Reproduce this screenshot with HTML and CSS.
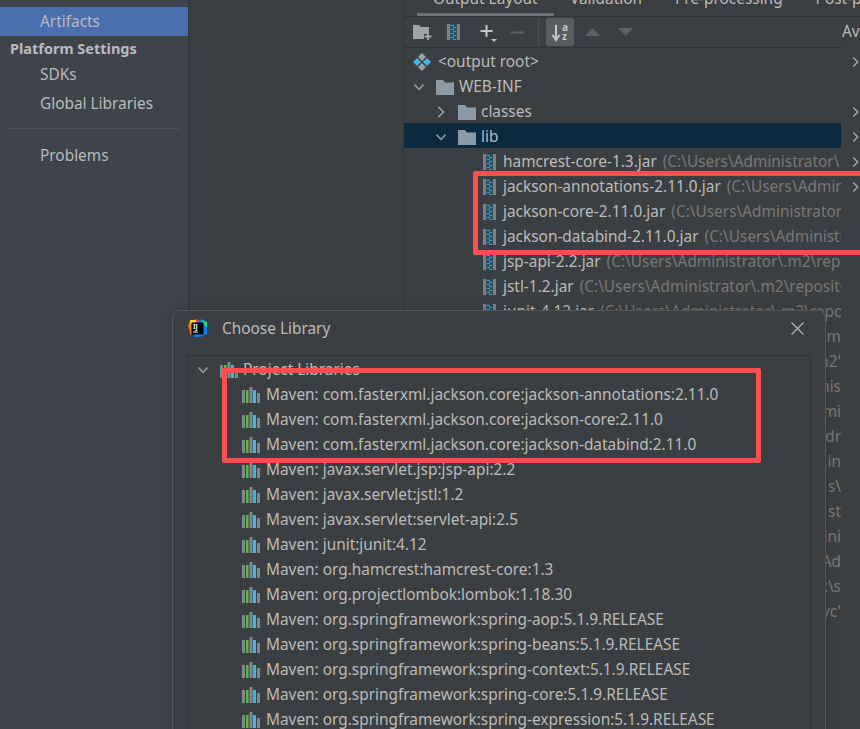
FILE: index.html
```html
<!DOCTYPE html>
<html lang="en">
<head>
  <meta charset="UTF-8">
  <meta name="viewport" content="width=device-width, initial-scale=1.0">
  <title>Project Structure</title>
  <link rel="stylesheet" href="styles.css">
</head>
<body>
  <svg class="icon-defs" width="0" height="0">
    <defs>
      <symbol id="i-folder" viewBox="0 0 18 16">
        <path d="M0 1h7l2 2.500h9V16H0z" fill="#8b9aa5"/>
      </symbol>
      <symbol id="i-jar" viewBox="0 0 13 16">
        <rect x="0" y="0" width="3.500" height="16" fill="#76838b"/>
        <rect x="9.500" y="0" width="3.500" height="16" fill="#76838b"/>
        <rect x="3.500" y="0" width="6" height="16" fill="#27414f"/>
        <path d="M4 1.500h3M6 3.500h3M4 5.500h3M6 7.500h3M4 9.500h3M6 11.500h3M4 13.500h3M6 15.500h3" stroke="#2f9fc9" stroke-width="1.300"/>
      </symbol>
      <symbol id="i-maven" viewBox="0 0 18 16">
        <rect x="0" y="3" width="3" height="13" fill="#7d8a92"/>
        <rect x="4" y="3" width="2.500" height="13" fill="#62b543"/>
        <rect x="7.500" y="0" width="3" height="16" fill="#7d8a92"/>
        <rect x="11" y="3" width="3" height="13" fill="#40b6e0"/>
        <rect x="15" y="6" width="3" height="10" fill="#7d8a92"/>
      </symbol>
      <symbol id="i-chev-right" viewBox="0 0 10 12">
        <path d="M2.500 1L7.500 6l-5 5" fill="none" stroke="#afb1b3" stroke-width="1.400"/>
      </symbol>
      <symbol id="i-chev-down" viewBox="0 0 12 10">
        <path d="M1.500 2.500L6 7.500l4.500-5" fill="none" stroke="#a0a3a5" stroke-width="1.400"/>
      </symbol>
    </defs>
  </svg>

  <div class="app">
    <aside class="sidebar">
      <div class="side-item selected">Artifacts</div>
      <div class="side-header">Platform Settings</div>
      <div class="side-item">SDKs</div>
      <div class="side-item">Global Libraries</div>
      <div class="side-sep"></div>
      <div class="side-item">Problems</div>
    </aside>

    <div class="middle"></div>

    <main class="content">
      <div class="tabs">
        <span class="tab tab-output">Output Layout</span>
        <span class="tab">Validation</span>
        <span class="tab">Pre-processing</span>
        <span class="tab">Post-processing</span>
      </div>

      <div class="toolbar">
        <div class="tools">
          <svg class="tool tool-folder" width="19" height="18" viewBox="0 0 19 18">
            <path d="M0 2h6l2 2h8v7h-5v5H0z" fill="#a0a3a5"/>
            <path d="M15 10v7M11.500 13.500h7" stroke="#a0a3a5" stroke-width="2"/>
          </svg>
          <svg class="tool tool-jar" width="13" height="16"><use href="#i-jar"/></svg>
          <svg class="tool tool-add" width="19" height="20" viewBox="0 0 19 20">
            <path d="M6.500 1v12M0.500 7h12" stroke="#c4c6c8" stroke-width="2"/>
            <path d="M11 15h6l-3 3z" fill="#c4c6c8"/>
          </svg>
          <svg class="tool tool-remove" width="13" height="3" viewBox="0 0 13 3">
            <rect width="13" height="2" y="0.500" fill="#5f6264"/>
          </svg>
          <span class="tool-sep"></span>
          <span class="tool-sort">
            <svg width="24" height="24" viewBox="0 0 24 24">
              <path d="M8 5v14M4.500 15l3.500 5 3.500-5" fill="none" stroke="#c4c6c8" stroke-width="2"/>
              <text x="14" y="11" class="sort-letter">a</text>
              <text x="14" y="20" class="sort-letter">z</text>
            </svg>
          </span>
          <svg class="tool tool-up" width="15" height="8" viewBox="0 0 15 8"><path d="M7.500 0L15 8H0z" fill="#5f6264"/></svg>
          <svg class="tool tool-down" width="15" height="8" viewBox="0 0 15 8"><path d="M0 0h15L7.500 8z" fill="#5f6264"/></svg>
        </div>
        <div class="avail-title">Available Elements</div>
      </div>

      <div class="panes">
        <div class="tree">
          <div class="row level-root">
            <svg class="root-icon" width="18" height="18" viewBox="0 0 18 18">
              <path d="M9 0l4 4-4 4-4-4z" fill="#9aa0a5"/>
              <path d="M4 5l4 4-4 4-4-4z" fill="#40b6e0"/>
              <path d="M14 5l4 4-4 4-4-4z" fill="#40b6e0"/>
              <path d="M9 10l4 4-4 4-4-4z" fill="#9aa0a5"/>
            </svg>
            <span class="name">&lt;output root&gt;</span>
          </div>
          <div class="row level-1">
            <svg class="chev" width="12" height="10"><use href="#i-chev-down"/></svg>
            <svg class="folder" width="18" height="16"><use href="#i-folder"/></svg>
            <span class="name">WEB-INF</span>
          </div>
          <div class="row level-2">
            <svg class="chev" width="10" height="12"><use href="#i-chev-right"/></svg>
            <svg class="folder" width="18" height="16"><use href="#i-folder"/></svg>
            <span class="name">classes</span>
          </div>
          <div class="row level-2 active">
            <svg class="chev" width="12" height="10"><use href="#i-chev-down"/></svg>
            <svg class="folder" width="18" height="16"><use href="#i-folder"/></svg>
            <span class="name">lib</span>
          </div>
          <div class="row level-3"><svg class="jar" width="13" height="16"><use href="#i-jar"/></svg><span class="name">hamcrest-core-1.3.jar</span><span class="path">(C:\Users\Administrator\.m2\repository\org\hamcrest</span></div>
          <div class="row level-3"><svg class="jar" width="13" height="16"><use href="#i-jar"/></svg><span class="name">jackson-annotations-2.11.0.jar</span><span class="path">(C:\Users\Administrator\.m2\repository</span></div>
          <div class="row level-3"><svg class="jar" width="13" height="16"><use href="#i-jar"/></svg><span class="name">jackson-core-2.11.0.jar</span><span class="path">(C:\Users\Administrator\.m2\repository</span></div>
          <div class="row level-3"><svg class="jar" width="13" height="16"><use href="#i-jar"/></svg><span class="name">jackson-databind-2.11.0.jar</span><span class="path">(C:\Users\Administrator\.m2\repository</span></div>
          <div class="row level-3"><svg class="jar" width="13" height="16"><use href="#i-jar"/></svg><span class="name">jsp-api-2.2.jar</span><span class="path">(C:\Users\Administrator\.m2\repository\javax</span></div>
          <div class="row level-3"><svg class="jar" width="13" height="16"><use href="#i-jar"/></svg><span class="name">jstl-1.2.jar</span><span class="path">(C:\Users\Administrator\.m2\repository\javax</span></div>
          <div class="row level-3"><svg class="jar" width="13" height="16"><use href="#i-jar"/></svg><span class="name">junit-4.12.jar</span><span class="path">(C:\Users\Administrator\.m2\repository\junit</span></div>
          <div class="row tail"><span class="path">m</span></div>
          <div class="row tail"><span class="path">n2'</span></div>
          <div class="row tail"><span class="path">nis</span></div>
          <div class="row tail"><span class="path">mi</span></div>
          <div class="row tail"><span class="path">dr</span></div>
          <div class="row tail"><span class="path">in</span></div>
          <div class="row tail"><span class="path">s\</span></div>
          <div class="row tail"><span class="path">st</span></div>
          <div class="row tail"><span class="path">ini</span></div>
          <div class="row tail"><span class="path">Ad</span></div>
          <div class="row tail"><span class="path">c\s</span></div>
          <div class="row tail"><span class="path">vc'</span></div>
        </div>

        <div class="available">
          <div class="avail-row"><svg width="10" height="12"><use href="#i-chev-right"/></svg></div>
          <div class="avail-row"></div>
          <div class="avail-row"><svg width="10" height="12"><use href="#i-chev-right"/></svg></div>
          <div class="avail-row"><svg width="10" height="12"><use href="#i-chev-right"/></svg></div>
          <div class="avail-row"><svg width="10" height="12"><use href="#i-chev-right"/></svg></div>
          <div class="avail-row"><svg width="10" height="12"><use href="#i-chev-right"/></svg></div>
        </div>
      </div>
    </main>

    <div class="mark mark-jars"></div>

    <section class="dialog">
      <header class="dialog-head">
        <svg class="logo" width="19" height="19" viewBox="0 0 19 19">
          <path d="M1 3L8 0l4 2-3 8-7 6z" fill="#fc3a6d"/>
          <path d="M0 6l4-3 3 9-4 4z" fill="#f97a12"/>
          <path d="M2 1h6v4H2z" fill="#ffd42a"/>
          <path d="M12 0l7 3v12l-7 3H6v-6z" fill="#087cfa"/>
          <path d="M14 1l5 2v5l-4-2z" fill="#21d789"/>
          <rect x="3.500" y="3.500" width="12" height="12" fill="#000"/>
          <text x="5" y="10" class="logo-letters">IJ</text>
          <rect x="5" y="12.500" width="5" height="1" fill="#fff"/>
        </svg>
        <span class="dialog-title">Choose Library</span>
        <svg class="close" width="13" height="13" viewBox="0 0 13 13">
          <path d="M0.500 0.500l12 12M12.500 0.500l-12 12" stroke="#b4b6b8" stroke-width="1.200"/>
        </svg>
      </header>
      <div class="lib-box">
        <div class="lib-group">
          <svg class="chev" width="12" height="10"><use href="#i-chev-down"/></svg>
          <svg class="maven" width="18" height="16"><use href="#i-maven"/></svg>
          <span class="name">Project Libraries</span>
        </div>
        <div class="lib"><svg class="maven" width="18" height="16"><use href="#i-maven"/></svg><span class="name">Maven: com.fasterxml.jackson.core:jackson-annotations:2.11.0</span></div>
        <div class="lib"><svg class="maven" width="18" height="16"><use href="#i-maven"/></svg><span class="name">Maven: com.fasterxml.jackson.core:jackson-core:2.11.0</span></div>
        <div class="lib"><svg class="maven" width="18" height="16"><use href="#i-maven"/></svg><span class="name">Maven: com.fasterxml.jackson.core:jackson-databind:2.11.0</span></div>
        <div class="lib"><svg class="maven" width="18" height="16"><use href="#i-maven"/></svg><span class="name">Maven: javax.servlet.jsp:jsp-api:2.2</span></div>
        <div class="lib"><svg class="maven" width="18" height="16"><use href="#i-maven"/></svg><span class="name">Maven: javax.servlet:jstl:1.2</span></div>
        <div class="lib"><svg class="maven" width="18" height="16"><use href="#i-maven"/></svg><span class="name">Maven: javax.servlet:servlet-api:2.5</span></div>
        <div class="lib"><svg class="maven" width="18" height="16"><use href="#i-maven"/></svg><span class="name">Maven: junit:junit:4.12</span></div>
        <div class="lib"><svg class="maven" width="18" height="16"><use href="#i-maven"/></svg><span class="name">Maven: org.hamcrest:hamcrest-core:1.3</span></div>
        <div class="lib"><svg class="maven" width="18" height="16"><use href="#i-maven"/></svg><span class="name">Maven: org.projectlombok:lombok:1.18.30</span></div>
        <div class="lib"><svg class="maven" width="18" height="16"><use href="#i-maven"/></svg><span class="name">Maven: org.springframework:spring-aop:5.1.9.RELEASE</span></div>
        <div class="lib"><svg class="maven" width="18" height="16"><use href="#i-maven"/></svg><span class="name">Maven: org.springframework:spring-beans:5.1.9.RELEASE</span></div>
        <div class="lib"><svg class="maven" width="18" height="16"><use href="#i-maven"/></svg><span class="name">Maven: org.springframework:spring-context:5.1.9.RELEASE</span></div>
        <div class="lib"><svg class="maven" width="18" height="16"><use href="#i-maven"/></svg><span class="name">Maven: org.springframework:spring-core:5.1.9.RELEASE</span></div>
        <div class="lib"><svg class="maven" width="18" height="16"><use href="#i-maven"/></svg><span class="name">Maven: org.springframework:spring-expression:5.1.9.RELEASE</span></div>
      </div>
      <div class="mark mark-libs"></div>
    </section>
  </div>
</body>
</html>
```

FILE: styles.css
```css
:root {
  --bg: #3c3f41;
  --side: #3e434c;
  --line: #323232;
  --text: #bbbbbb;
  --text-dim: #787878;
  --selected: #4b6eaf;
  --active: #0d293e;
  --mark: #fc5050;
}

* {
  margin: 0;
  padding: 0;
  box-sizing: border-box;
  font-family: 'Noto Sans', Arial, sans-serif;
}

body {
  background-color: var(--bg);
  color: var(--text);
  font-size: 15.4px;
  overflow: hidden;
}

.icon-defs {
  display: block;
  height: 0;
}

.app {
  position: relative;
  display: flex;
  width: 860px;
  height: 729px;
  overflow: hidden;
}

/* left settings list */
.sidebar {
  width: 189px;
  flex-shrink: 0;
  padding-top: 7px;
  background-color: var(--side);
  border-right: 1px solid var(--line);
}

.side-item {
  height: 29px;
  line-height: 29px;
  padding-left: 40px;
}

.side-item.selected {
  background-color: var(--selected);
}

.side-header {
  height: 24px;
  line-height: 24px;
  padding-left: 10px;
  font-size: 14.5px;
  font-weight: 700;
}

.side-sep {
  height: 1px;
  margin: 10px 8px 12px;
  background-color: #4d4f51;
}

.middle {
  width: 215px;
  flex-shrink: 0;
  border-right: 1px solid var(--line);
}

/* right part with the output layout */
.content {
  flex: 1;
  min-width: 0;
}

.tabs {
  display: flex;
  align-items: flex-end;
  height: 17px;
  padding-left: 13px;
  border-bottom: 1px solid var(--line);
  white-space: nowrap;
  overflow: hidden;
}

.tab {
  flex-shrink: 0;
  padding: 0 16.5px 7px;
  line-height: 20px;
}

.tab-output {
  border-bottom: 3px solid #6e7072;
  padding: 0 16px 4px;
}

.toolbar {
  display: flex;
  height: 31px;
}

.tools {
  display: flex;
  align-items: center;
  width: 437px;
  flex-shrink: 0;
  padding-left: 9px;
  border-bottom: 1px solid var(--line);
}

.avail-title {
  padding-left: 1px;
  line-height: 30px;
  white-space: nowrap;
}

.tool {
  flex-shrink: 0;
  display: block;
}

.tool-jar {
  margin-left: 15px;
}

.tool-add {
  margin-left: 20px;
  margin-top: 3px;
}

.tool-remove {
  margin-left: 12px;
}

.tool-sep {
  width: 1px;
  height: 26px;
  margin-left: 14px;
  background-color: #505254;
}

.tool-sort {
  display: flex;
  align-items: center;
  justify-content: center;
  width: 28px;
  height: 28px;
  margin-left: 7px;
  border-radius: 3px;
  background-color: #5a5d5f;
}

.sort-letter {
  font-size: 10px;
  font-weight: 700;
  fill: #c4c6c8;
}

.tool-up {
  margin-left: 11px;
}

.tool-down {
  margin-left: 18px;
}

.panes {
  display: flex;
}

.tree {
  width: 437px;
  flex-shrink: 0;
  overflow: hidden;
}

.row {
  display: flex;
  align-items: center;
  height: 25px;
  padding-top: 2px;
  white-space: nowrap;
  overflow: hidden;
}

.row.active {
  background-color: var(--active);
}

.row.tail {
  justify-content: flex-end;
}

.level-root {
  padding-left: 9px;
}

.root-icon {
  flex-shrink: 0;
  margin-right: 7px;
}

.level-1 {
  padding-left: 9px;
}

.level-1 .chev {
  margin-right: 11px;
}

.level-2 {
  padding-left: 32px;
}

.level-2 .chev {
  margin-right: 12px;
}

.level-2.active .chev {
  margin-left: -1px;
  margin-right: 11px;
}

.level-3 {
  padding-left: 79px;
}

.chev,
.folder,
.jar,
.maven {
  flex-shrink: 0;
}

.folder {
  margin-right: 5px;
}

.jar {
  margin-right: 7px;
}

.path {
  margin-left: 6px;
  color: var(--text-dim);
}

.available {
  flex: 1;
  min-width: 0;
  overflow: hidden;
}

.avail-row {
  display: flex;
  align-items: center;
  height: 25px;
  padding: 2px 0 0 10px;
}

/* red marks drawn on top of the screenshot */
.mark {
  position: absolute;
  border: 5px solid var(--mark);
  border-radius: 2px;
}

.mark-jars {
  left: 473px;
  top: 171px;
  width: 400px;
  height: 84px;
}

.mark-libs {
  left: 49px;
  top: 57px;
  width: 539px;
  height: 95px;
}

.dialog {
  position: absolute;
  left: 172px;
  top: 310px;
  width: 654px;
  height: 440px;
  background-color: var(--bg);
  border: 1px solid #555759;
  border-radius: 8px 8px 0 0;
  box-shadow: 0 0 10px rgba(0, 0, 0, 0.15);
}

.dialog-head {
  display: flex;
  align-items: center;
  height: 34px;
  padding: 0 21px 0 15px;
}

.logo {
  flex-shrink: 0;
  margin-right: 15px;
}

.logo-letters {
  font-size: 6.5px;
  font-weight: 700;
  fill: #fff;
}

.dialog-title {
  flex: 1;
}

.lib-box {
  margin: 10px 14px 0;
  height: 420px;
  border: 1px solid var(--line);
}

.lib-group,
.lib {
  display: flex;
  align-items: center;
  height: 25px;
  padding-top: 2px;
  white-space: nowrap;
}

.lib-group {
  padding-left: 9px;
}

.lib-group .chev {
  margin-right: 11px;
}

.lib-group .maven {
  margin-right: 5px;
}

.lib {
  padding-left: 54px;
}

.lib .maven {
  margin-right: 6px;
}
```
